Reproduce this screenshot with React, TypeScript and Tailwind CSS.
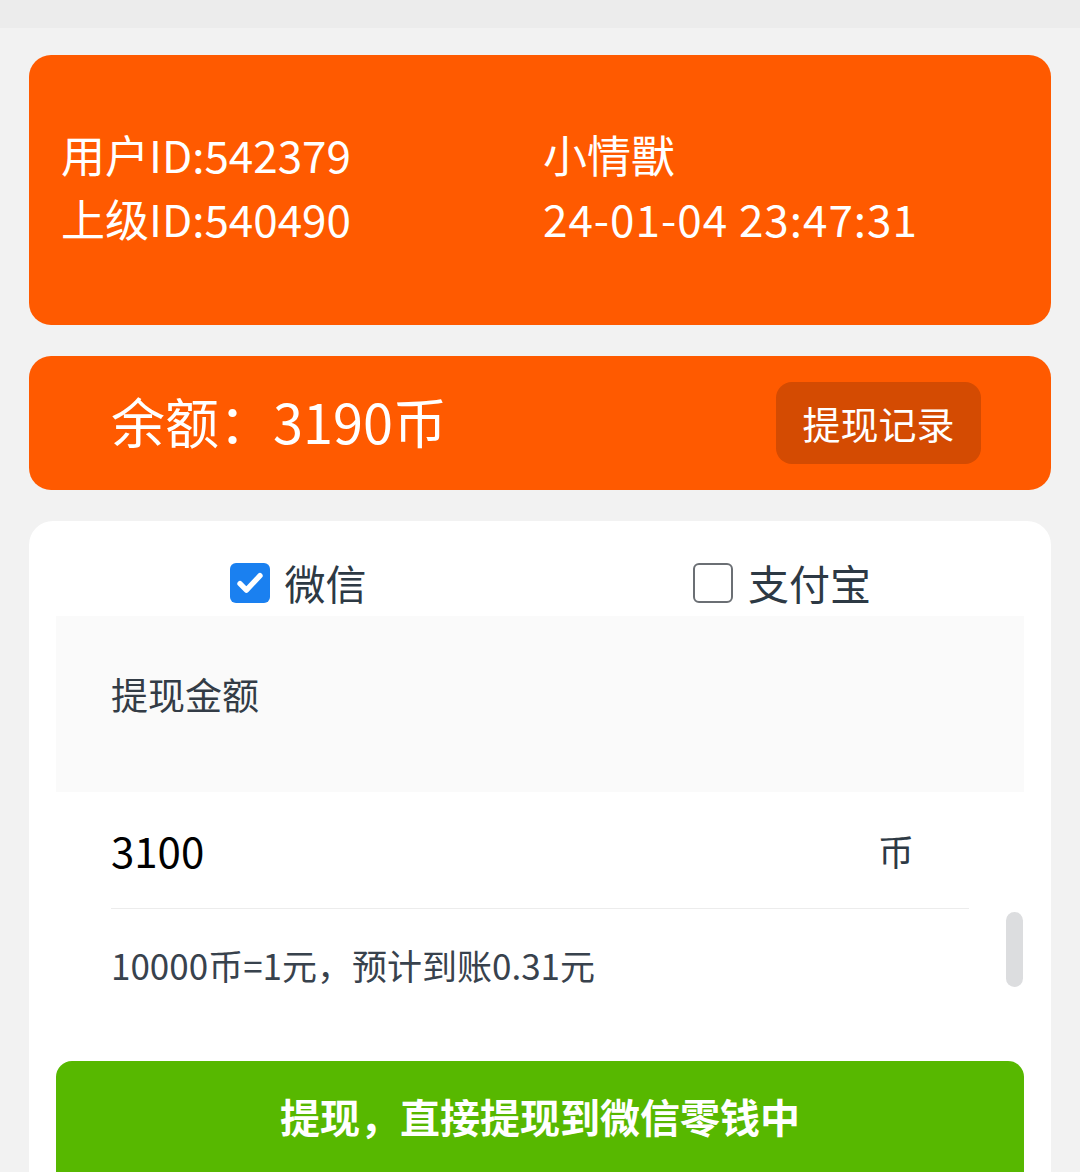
import React from 'react';

const font = { fontFamily: '"Noto Sans CJK SC", "Noto Sans", sans-serif' };

function CheckBox({ checked }: { checked: boolean }) {
  if (checked) {
    return (
      <span className="w-[40px] h-[40px] rounded-[6px] bg-[#1a80f0] flex items-center justify-center">
        <svg width="32" height="32" viewBox="0 0 24 24" fill="none">
          <path d="M4.5 12.5l4.8 4.8L19.5 6.5" stroke="#fff" strokeWidth="4" strokeLinecap="round" strokeLinejoin="round" />
        </svg>
      </span>
    );
  }
  return <span className="w-[40px] h-[40px] rounded-[6px] border-2 border-[#6b6f74] bg-white" />;
}

export default function App() {
  return (
    <div style={font} className="min-h-[1172px] h-[1172px] overflow-hidden bg-[#f2f2f2]">
      <div className="h-[28px] bg-[#ececec]" />

      <div className="px-[29px]">
        {/* user info */}
        <div className="mt-[27px] h-[270px] rounded-[22px] bg-[#ff5a00] flex items-center pl-[32px] pb-[8px] text-white text-[44px] leading-[64px]">
          <div className="w-[482px]">
            <div>用户ID:542379</div>
            <div>上级ID:540490</div>
          </div>
          <div>
            <div>小情獸</div>
            <div className="tracking-[1px]">24-01-04 23:47:31</div>
          </div>
        </div>

        {/* balance */}
        <div className="mt-[31px] h-[134px] rounded-[22px] bg-[#ff5a00] flex items-center justify-between pl-[82px] pr-[70px]">
          <span className="text-white text-[54px] leading-none pb-[4px]">余额：3190币</span>
          <button className="w-[205px] h-[82px] rounded-[16px] bg-[#d44b02] text-white text-[38px] leading-none">
            提现记录
          </button>
        </div>

        {/* withdraw form */}
        <div className="relative mt-[31px] h-[700px] rounded-t-[24px] bg-white px-[27px]">
          <div className="h-[95px] pt-[28px] grid grid-cols-2">
            <label className="flex items-center justify-center gap-[15px] text-[41px] text-[#2d3944]">
              <CheckBox checked />
              <span className="leading-none">微信</span>
            </label>
            <label className="flex items-center justify-center gap-[15px] text-[41px] text-[#2d3944]">
              <CheckBox checked={false} />
              <span className="leading-none">支付宝</span>
            </label>
          </div>

          <div className="h-[176px] bg-[#fafafa] pl-[55px] pt-[55px]">
            <span className="text-[37px] leading-[46px] text-[#333c46]">提现金额</span>
          </div>

          <div className="mx-[55px] h-[117px] flex items-center justify-between pr-[55px] border-b border-[#ececec]">
            <span className="text-[42px] text-black leading-none">3100</span>
            <span className="text-[36px] text-[#2d3944] leading-none">币</span>
          </div>

          <div className="h-[116px] flex items-center pl-[55px] pb-[4px] text-[35px] text-[#38424d]">
            10000币=1元，预计到账0.31元
          </div>

          <button className="mt-[36px] w-full h-[130px] rounded-[16px] bg-[#57b800] flex justify-center pt-[35px] text-white text-[40px] font-bold leading-none">
            提现，直接提现到微信零钱中
          </button>

          <div className="absolute left-[977px] top-[391px] w-[17px] h-[75px] rounded-full bg-[#dcdddf]" />
        </div>
      </div>
    </div>
  );
}
